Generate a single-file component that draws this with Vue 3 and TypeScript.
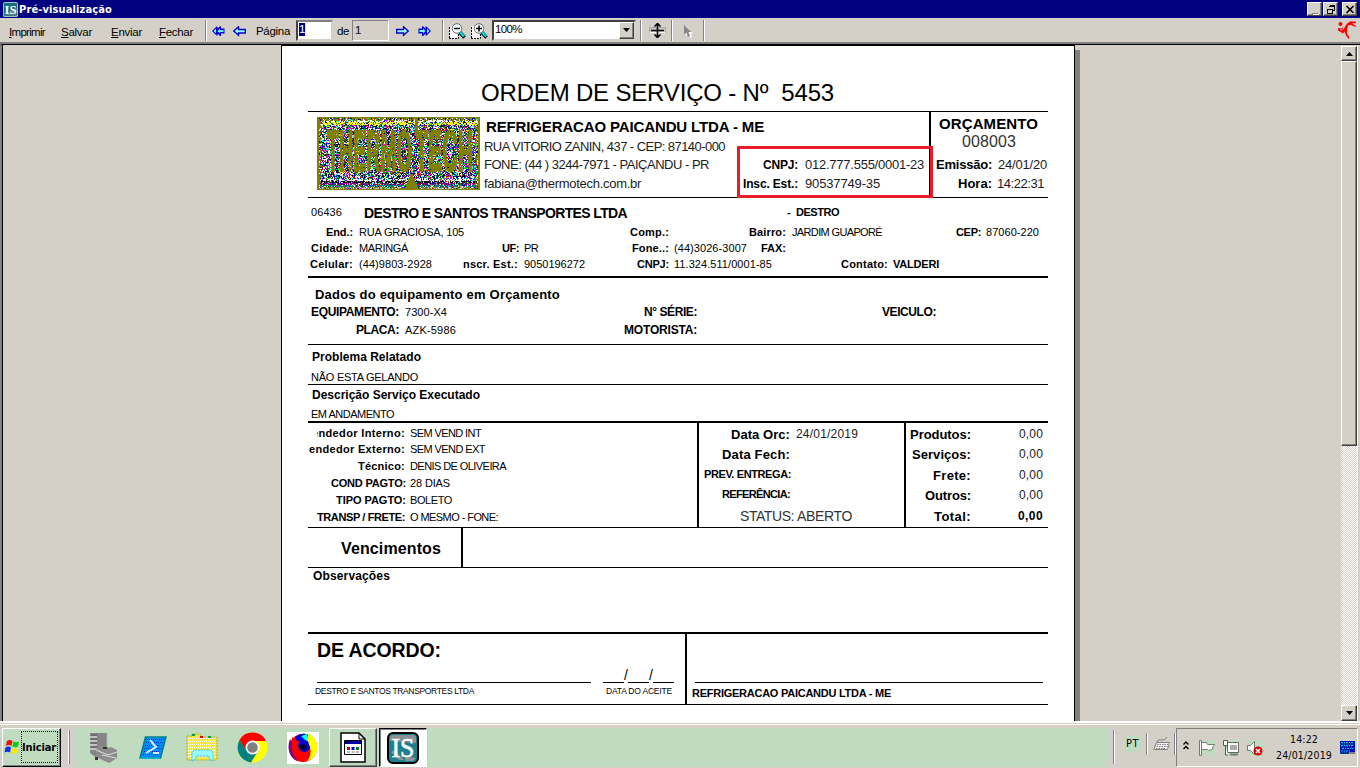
<script setup lang="ts">
import type { Directive } from 'vue'

type Cell = [left: number, right: number, text: string, kind?: string]
interface Row { y: number; cells: Cell[] }
interface Pane { left: number; right: number; divider?: boolean; logo?: boolean; rows: Row[] }
interface Band { top: number; bottom: number; rule: number; panes: Pane[] }

// Spreads the letters of a field over its printed width.
const vFit: Directive<HTMLElement, number> = {
  mounted(el, { value }) {
    const n = (el.textContent ?? '').length
    if (!n || !value) return
    const range = document.createRange()
    range.selectNodeContents(el)
    const natural = range.getBoundingClientRect().width
    el.style.letterSpacing = `${((value - natural) / n).toFixed(3)}px`
  },
}

const L = 308
const R = 1048
const r = (y: number, ...cells: Cell[]): Row => ({ y, cells })

const bands: Band[] = [
  { top: 46, bottom: 111, rule: 1, panes: [{ left: L, right: R, rows: [r(93, [481, 834, 'ORDEM DE SERVIÇO - Nº  5453', 'f24'])] }] },
  {
    top: 112, bottom: 197, rule: 1, panes: [
      { left: L, right: 482, logo: true, rows: [] },
      {
        left: 482, right: 929, divider: true, rows: [
          r(127, [486, 764, 'REFRIGERACAO PAICANDU LTDA - ME', 'b f15']),
          r(147, [484, 725, 'RUA VITORIO ZANIN, 437 - CEP: 87140-000', 'f13 thin']),
          r(165, [484, 709, 'FONE: (44 ) 3244-7971 - PAIÇANDU - PR', 'f13 thin'], [763, 798, 'CNPJ:', 'b f12'], [805, 924, '012.777.555/0001-23', 'f13 thin']),
          r(184, [484, 641, 'fabiana@thermotech.com.br', 'f13 thin'], [743, 798, 'Insc. Est.:', 'b f12'], [805, 880, '90537749-35', 'f13 thin']),
        ],
      },
      {
        left: 931, right: R, rows: [
          r(124, [939, 1038, 'ORÇAMENTO', 'b f15']),
          r(142, [962, 1016, '008003', 'f16 pale']),
          r(165, [936, 992, 'Emissão:', 'b f13'], [998, 1061, '24/01/2019', 'f13 thin']),
          r(184, [958, 992, 'Hora:', 'b f13'], [997, 1044, '14:22:31', 'f13 thin']),
        ],
      },
    ],
  },
  {
    top: 198, bottom: 276, rule: 2, panes: [{
      left: L, right: R, rows: [
        r(212, [311, 342, '06436'], [364, 627, 'DESTRO E SANTOS TRANSPORTES LTDA', 'b f14 low'], [787, 791, '-', 'b'], [796, 839, 'DESTRO', 'b']),
        r(232, [326, 353, 'End.:', 'b'], [359, 464, 'RUA GRACIOSA, 105'], [630, 669, 'Comp.:', 'b'], [749, 786, 'Bairro:', 'b'], [792, 882, 'JARDIM GUAPORÉ'], [956, 981, 'CEP:', 'b'], [986, 1039, '87060-220']),
        r(248, [311, 353, 'Cidade:', 'b'], [359, 408, 'MARINGÁ'], [502, 519, 'UF:', 'b'], [524, 538, 'PR'], [632, 669, 'Fone..:', 'b'], [674, 747, '(44)3026-3007'], [761, 786, 'FAX:', 'b']),
        r(264, [310, 353, 'Celular:', 'b'], [359, 432, '(44)9803-2928'], [463, 518, 'nscr. Est.:', 'b'], [524, 585, '9050196272'], [637, 669, 'CNPJ:', 'b'], [674, 772, '11.324.511/0001-85'], [841, 888, 'Contato:', 'b'], [893, 939, 'VALDERI', 'b']),
      ],
    }],
  },
  {
    top: 278, bottom: 344, rule: 1, panes: [{
      left: L, right: R, rows: [
        r(295, [315, 560, 'Dados do equipamento em Orçamento', 'b f13']),
        r(312, [311, 399, 'EQUIPAMENTO:', 'b f12'], [405, 447, '7300-X4'], [644, 697, 'N° SÉRIE:', 'b f12'], [882, 936, 'VEICULO:', 'b f12']),
        r(330, [356, 399, 'PLACA:', 'b f12'], [405, 456, 'AZK-5986'], [624, 697, 'MOTORISTA:', 'b f12']),
      ],
    }],
  },
  { top: 345, bottom: 384, rule: 1, panes: [{ left: L, right: R, rows: [r(357, [312, 421, 'Problema Relatado', 'b f12']), r(377, [311, 418, 'NÃO ESTA GELANDO'])] }] },
  { top: 385, bottom: 421, rule: 2, panes: [{ left: L, right: R, rows: [r(395, [312, 480, 'Descrição Serviço Executado', 'b f12']), r(414, [311, 394, 'EM ANDAMENTO'])] }] },
  {
    top: 423, bottom: 527, rule: 1, panes: [
      {
        left: L, right: 697, divider: true, rows: [
          r(433, [317, 405, 'endedor Interno:', 'b cut'], [410, 481, 'SEM VEND INT']),
          r(449, [309, 405, 'endedor Externo:', 'b'], [410, 485, 'SEM VEND EXT']),
          r(466, [358, 405, 'Técnico:', 'b'], [410, 506, 'DENIS DE OLIVEIRA']),
          r(483, [331, 406, 'COND PAGTO:', 'b'], [410, 450, '28 DIAS']),
          r(500, [336, 406, 'TIPO PAGTO:', 'b'], [410, 452, 'BOLETO']),
          r(517, [317, 405, 'TRANSP / FRETE:', 'b'], [410, 498, 'O MESMO - FONE:']),
        ],
      },
      {
        left: 699, right: 904, divider: true, rows: [
          r(434, [731, 790, 'Data Orc:', 'b f13 low'], [796, 858, '24/01/2019', 'f12 thin']),
          r(454, [722, 790, 'Data Fech:', 'b f13 low']),
          r(474, [704, 791, 'PREV. ENTREGA:', 'b']),
          r(494, [722, 790, 'REFERÊNCIA:', 'b']),
          r(516, [740, 794, 'STATUS:', 'f14 pale'], [797, 852, 'ABERTO', 'f14 pale']),
        ],
      },
      {
        left: 906, right: R, rows: [
          r(434, [910, 971, 'Produtos:', 'b f13 low'], [1019, 1043, '0,00', 'f12 thin']),
          r(454, [912, 971, 'Serviços:', 'b f13 low'], [1019, 1043, '0,00', 'f12 thin']),
          r(475, [933, 971, 'Frete:', 'b f13 low'], [1019, 1043, '0,00', 'f12 thin']),
          r(495, [925, 971, 'Outros:', 'b f13 low'], [1019, 1043, '0,00', 'f12 thin']),
          r(516, [934, 971, 'Total:', 'b f13 low'], [1018, 1043, '0,00', 'b f12']),
        ],
      },
    ],
  },
  {
    top: 528, bottom: 567, rule: 1, panes: [
      { left: L, right: 461, divider: true, rows: [r(549, [341, 441, 'Vencimentos', 'b f16'])] },
      { left: 463, right: R, rows: [] },
    ],
  },
  { top: 568, bottom: 632, rule: 2, panes: [{ left: L, right: R, rows: [r(576, [313, 390, 'Observações', 'b f12'])] }] },
  {
    top: 634, bottom: 704, rule: 1, panes: [
      {
        left: L, right: 685, divider: true, rows: [
          r(650, [317, 441, 'DE ACORDO:', 'b f19']),
          r(675, [624, 628, '/', 'f14'], [649, 653, '/', 'f14']),
          r(682.5, [317, 591, '', 'line'], [603, 624, '', 'line'], [628, 649, '', 'line'], [653, 674, '', 'line']),
          r(691, [315, 474, 'DESTRO E SANTOS TRANSPORTES LTDA', 'f8'], [606, 672, 'DATA DO ACEITE', 'f8']),
        ],
      },
      {
        left: 687, right: R, rows: [
          r(682.5, [695, 1043, '', 'line']),
          r(693, [692, 891, 'REFRIGERACAO PAICANDU LTDA - ME', 'b']),
        ],
      },
    ],
  },
]

const ROW = 12
const rowStyle = (band: Band, rows: Row[], i: number) => {
  const prev = i ? rows[i - 1].y + ROW / 2 : band.top
  return { marginTop: `${rows[i].y - ROW / 2 - prev}px` }
}
const cellStyle = (pane: Pane, cells: Cell[], i: number) => {
  const prev = i ? cells[i - 1][1] : pane.left
  return { marginLeft: `${cells[i][0] - prev}px`, width: `${cells[i][1] - cells[i][0]}px` }
}
// A cut field starts 5px before its visible box.
const fitWidth = (c: Cell) => c[1] - c[0] + (c[3]?.includes('cut') ? 5 : 0)

// Dithered company logo: one path per palette colour, filled from a seeded generator.
const LOGO_W = 163
const LOGO_H = 73
const palette = ['#fff', '#000080', '#f0f', '#0ff', '#008000', '#000', '#008080', '#f00', '#ff0', '#c0c0c0', '#00f', '#800080', '#0f0']
const weights = [24, 11, 7, 6, 9, 10, 9, 6, 3, 8, 9, 5, 3]
let seed = 5453
const rnd = () => {
  seed = (seed * 1664525 + 1013904223) >>> 0
  return seed / 4294967296
}
function dither(x0: number, y0: number, x1: number, y1: number, density: number) {
  const runs = palette.map(() => '')
  const total = weights.reduce((a, b) => a + b, 0)
  for (let y = y0; y < y1; y++) {
    for (let x = x0; x < x1; x++) {
      const edge = Math.min(x - 2, y - 2, LOGO_W - 4 - x, LOGO_H - 2 - y)
      const notch = y > 56 ? Math.abs(x - 94) < (y - 54) * 0.4 : Math.abs(x - 99) < 1.500 && y < 14
      if (notch || rnd() > (edge < 2 ? density * 0.5 : density)) continue
      let pick = rnd() * total
      let k = 0
      while (pick > weights[k]) pick -= weights[k++]
      if (y > 2 && y < 8 && x > 5 && rnd() < 0.6) k = y < 5 ? 0 : 8
      if (y > 61 && rnd() < 0.5) k = [0, 5, 11, 6, 9, 3][(y - 62) >> 1] ?? 5
      runs[k] += `M${x} ${y}h1v1h-1z`
    }
  }
  return palette.map((fill, i) => ({ fill, d: runs[i] }))
}
const logo = dither(2, 1, LOGO_W - 2, LOGO_H - 1, 0.96)
const speckle = dither(10, 13, LOGO_W - 5, 55, 0.05)
</script>

<template>
  <div class="screen">
    <header class="titlebar">
      <svg class="appicon" width="15" height="15" viewBox="0 0 32 32">
        <rect width="32" height="32" rx="4" fill="#9ec4c8" /><rect x="2" y="2" width="28" height="28" rx="3" fill="#176f7c" /><path d="M3 28L29 12v14l-3 3z" fill="#5d8794" />
        <text x="3" y="25" font-size="25" font-weight="bold" fill="#fff" textLength="26" lengthAdjust="spacingAndGlyphs" font-family="Liberation Serif, serif">IS</text>
      </svg>
      <span v-fit="93" class="caption">Pré-visualização</span>
      <div class="winbtns">
        <span class="raised"><svg width="12" height="11" shape-rendering="crispEdges"><path d="M3 9h6v1h-6z" fill="#808080" /><path d="M4 10h6v1H4z" fill="#fff" /></svg></span>
        <span class="raised"><svg width="12" height="11" shape-rendering="crispEdges"><path d="M4.500 1.500h5v5h-2M4 2h6M2.500 5.500h5v4h-5zM2 5h6" stroke="#000" fill="none" /></svg></span>
        <span class="raised close"><svg width="12" height="11"><path d="M2.500 2l7 7M9.500 2l-7 7" stroke="#000" stroke-width="1.700" /></svg></span>
      </div>
    </header>

    <nav class="toolbar">
      <span v-fit="36" class="menu m1"><u>I</u>mprimir</span>
      <span v-fit="31" class="menu m2"><u>S</u>alvar</span>
      <span v-fit="31" class="menu m3"><u>E</u>nviar</span>
      <span v-fit="34" class="menu m4"><u>F</u>echar</span>
      <i class="sep s1"></i>
      <svg class="nav n1" width="13" height="11" viewBox="0 0 13 11"><path d="M4.500.5L0 5l4.500 4.500h1V7.500L8 10h1V7.500h3.500v-5H9V.3H8L5.500 2.500v-2z" fill="#0000d8" /><path d="M1.500 5L4 2.500v5zM5.500 5L8 2.500V4h3.500v2H8v1.500z" fill="#6ff" /></svg>
      <svg class="nav n2" width="13" height="11" viewBox="0 0 13 11"><path d="M5.500.7L.8 5l4.700 4.300V7h6.800V3.500H5.500z" fill="#9ff" stroke="#0000c8" stroke-width="1.300" /></svg>
      <span v-fit="34" class="menu m5">Página</span>
      <span class="field f1"><b>1</b></span>
      <span v-fit="12" class="menu m6">de</span>
      <span class="field f2">1</span>
      <svg class="nav n3" width="13" height="11" viewBox="0 0 13 11"><path d="M7.500.7L12.200 5 7.500 9.300V7H.7V3.500h6.800z" fill="#9ff" stroke="#0000c8" stroke-width="1.300" /></svg>
      <svg class="nav n4" width="13" height="11" viewBox="0 0 13 11"><path d="M8.500.5L13 5 8.500 9.500h-1V7.500L5 10H4V7.500H.5v-5H4V.3h1l2.500 2.200v-2z" fill="#0000d8" /><path d="M11.500 5L9 2.500v5zM7.500 5L5 2.500V4H1.500v2H5v1.500z" fill="#6ff" /></svg>
      <i class="sep s2"></i>
      <svg v-for="plus in [false, true]" :key="String(plus)" class="mag" width="17" height="17" viewBox="0 0 17 17">
        <path d="M.5 3.500h8v12h-8z" fill="#fff" /><path d="M.5 4v11.500M0 15.500h9.500V11" fill="none" stroke="#000" stroke-dasharray="2 1" />
        <path d="M11 9.500l4.500 5" stroke="#000" stroke-width="3.500" /><path d="M10.500 8.500l4.500 5" stroke="#00d8e8" stroke-width="2.600" />
        <circle cx="8" cy="5.500" r="4.800" fill="#f4ffff" stroke="#666" /><path :d="plus ? 'M5 5.500h6M8 2.500v6' : 'M5 5.500h6'" stroke="#000" stroke-width="1.500" />
      </svg>
      <span class="select"><span v-fit="27" class="pct">100%</span><span class="raised drop"><svg width="7" height="4"><path d="M0 0h7L3.500 4z" /></svg></span></span>
      <i class="sep s3"></i>
      <svg class="fit" width="17" height="15" viewBox="0 0 17 15"><path d="M.5 4.500h16v5H.5z" fill="#c8c8c8" stroke="#aaa" /><path d="M1 9.500h15" stroke="#fff" /><path d="M2 7.500h13M8.500 1v13M5.500 3.500l3-3 3 3M5.500 11.500l3 3 3-3" fill="none" stroke="#000" stroke-width="1.600" /></svg>
      <i class="sep s4"></i>
      <svg class="ptr" width="9" height="13" viewBox="0 0 9 13"><path d="M2 1v10l2.500-2 1.500 4 2-1-1.500-3.500H9z" fill="#fff" /><path d="M0 0v9.500L2.300 7.500 4 12l2-1-1.700-4H7.500z" fill="#868686" /></svg>
      <i class="sep s5"></i>
      <svg class="brand" width="19" height="19" viewBox="0 0 19 19"><circle cx="2.500" cy="3" r="2" fill="#f00" /><path d="M5.500 8L9 2.500 12.500.3 18 .8v1.500h-4L18 5v1l-5-2-3 .5-1 4 .3 4.500 2 3-.3 2.200-3-3.700L6.500 10.500 5 12.500 0 9.500V7l4 .5 1-2z" fill="#f00" /><path d="M2 9l2.500-.5L6 6.500" fill="none" stroke="#d4d0c8" /></svg>
    </nav>

    <main class="viewer">
      <section class="canvas">
        <article class="sheet">
          <div v-for="band in bands" :key="band.top" class="band" :style="{ height: `${band.bottom - band.top}px`, borderBottomWidth: `${band.rule}px` }">
            <div v-for="pane in band.panes" :key="pane.left" class="pane" :class="{ divider: pane.divider }" :style="{ width: `${pane.right - pane.left}px` }">
              <svg v-if="pane.logo" class="logo" :width="LOGO_W" :height="LOGO_H" shape-rendering="crispEdges">
                <rect :width="LOGO_W" :height="LOGO_H" fill="#808000" />
                <path v-for="p in logo" :key="p.fill" :d="p.d" :fill="p.fill" />
                <g fill="#808000" stroke="#808000" stroke-width="2" font-family="Liberation Sans, sans-serif" font-weight="bold" font-size="57">
                  <text transform="translate(10 54) scale(.344 1)">THERMO</text>
                  <text transform="translate(98 54) scale(.375 1)">TECH</text>
                </g>
                <path v-for="p in speckle" :key="`s${p.fill}`" :d="p.d" :fill="p.fill" />
              </svg>
              <div v-for="(row, i) in pane.rows" :key="row.y" class="row" :style="rowStyle(band, pane.rows, i)">
                <span v-for="(cell, j) in row.cells" :key="cell[0]" v-fit="fitWidth(cell)" class="cell" :class="cell[3]" :style="cellStyle(pane, row.cells, j)">{{ cell[2] }}</span>
              </div>
            </div>
          </div>
          <div class="highlight"></div>
        </article>
      </section>
      <aside class="scroll">
        <span class="raised up"><svg width="7" height="4"><path d="M0 4h7L3.500 0z" /></svg></span>
        <span class="raised thumb"></span>
        <span class="track"></span>
        <span class="raised down"><svg width="7" height="4"><path d="M0 0h7L3.500 4z" /></svg></span>
      </aside>
    </main>

    <footer class="taskbar">
      <button class="start">
        <svg width="17" height="17" viewBox="0 0 17 17"><path d="M3 2q3-2 5.500 0L7.500 7Q5 5 1.800 7z" fill="#f01000" /><path d="M9.500 2.500q3 1.500 5.500 0L14 7.500q-3 1.300-5.500 0z" fill="#00d010" /><path d="M1.500 8.500q3-2 5.500 0L6 13.500Q3.500 12 .5 13.500z" fill="#1030f0" /><path d="M8.300 9q3 1.500 5.500 0l-1 5q-3 1.500-5.500 0z" fill="#f8e800" /></svg>
        <span class="focus"><span v-fit="34">Iniciar</span></span>
      </button>
      <i class="grip"></i>
      <div class="band-green">
        <svg class="t1" width="30" height="32" viewBox="0 0 30 32"><path d="M1 1h18v19H9v7l-8-6z" fill="#858585" /><path d="M1 5h7M1 9h7M1 13h7M1 17h7" stroke="#fff" /><path d="M2 3h6M2 7h6M2 11h6M2 15h6" stroke="#555" /><path d="M18.500 1v14" stroke="#c8c8c8" stroke-width="1.500" /><path d="M7 17l6-3 5 2 4-1 6 3v8l-8 5-13-6z" fill="#8c8c8c" /><path d="M7 18l12 5 9-3M13 23l14 3" stroke="#ddd" fill="none" /><path d="M6 25h3v3H6zM14 15h4v2h-4z" fill="#333" /></svg>
        <svg class="t2" width="28" height="23" viewBox="0 0 28 23"><path d="M6.500 1h20.500l-5.500 21H1z" fill="#008cff" stroke="#008080" stroke-width="1.500" /><path d="M8 3.500h17M7 6.500h18M6 9.500h18M5.500 12.500h17M5 15.500h16M4 18.500h16" stroke="#0030c0" stroke-dasharray="1 1" /><path d="M11 4l6 7-10 6M14 17h6" fill="none" stroke="#d8f0ff" stroke-width="2" /><path d="M1 22h20" stroke="#0cf" /></svg>
        <svg class="t3" width="33" height="31" viewBox="0 0 33 31"><path d="M1 4h5V2h8l2 3h15v23H1z" fill="#f0ea50" /><path d="M2 6.500h28M2 9.500h28M2 12.500h28M2 15.500h28M2 18.500h28M2 21.500h28M2 24.500h28" stroke="#fff" stroke-dasharray="1 1" /><path d="M1 4h5V2h8l2 3h15v23H1z" fill="none" stroke="#a8a830" stroke-dasharray="2 1" /><path d="M6 29v-7q0-4 5-4h12q4 0 4 4v7l-4-2v-3H10v3z" fill="#9ff" stroke="#38b8e0" stroke-dasharray="2 1" /><path d="M6 2h3v2H6zM22 4h3v2h-3z" fill="#00a040" /><path d="M14 4h3v2h-3z" fill="#e00000" /></svg>
        <svg class="t4" width="31" height="31" viewBox="0 0 31 31"><circle cx="15.500" cy="15.500" r="15" fill="#ff0" /><path d="M2.500 8A15 15 0 0 1 29 9H15.500L9 19z" fill="#f00" /><path d="M2.500 8A15 15 0 0 0 14 30.400L21 19 9 18z" fill="#008080" /><circle cx="15.500" cy="15.500" r="7" fill="#fff" /><circle cx="15.500" cy="15.500" r="5.300" fill="#808080" /></svg>
        <svg class="t5" width="32" height="32" viewBox="0 0 32 32"><rect width="32" height="32" fill="#fff" /><circle cx="16" cy="16" r="14" fill="#f00" /><path d="M8 5Q15-1 22 3l3 12-9 7-6-6z" fill="#0000d8" /><path d="M14 4l6-2 2 8-4-2z" fill="#0ff" /><path d="M12 13l5-1 3 3-4 3-3-1z" fill="#002" /><path d="M21 1q9 5 9.500 14Q30 26 20 29.500 25 23 23 15 20 9 21 1z" fill="#ff0" /><path d="M3 7q-3 8 0 15 3 6 8 7Q3 20 5 10z" fill="#800080" /><path d="M5 5q4 4 7 4l-1 6q3 7 11 5 2 7-7 10-11-5-10-25z" fill="#f00" /></svg>
        <span class="raised taskbtn b1"><svg width="26" height="31" viewBox="0 0 26 31"><path d="M1 1h18l6 6v23H1z" fill="#fff" stroke="#000" stroke-width="1.500" /><path d="M19 1v6h6" fill="none" stroke="#000" /><path d="M4.500 8.500h17v14h-17z" fill="#fff" stroke="#000" /><path d="M5 9h16v3H5z" fill="#0000a0" /><path d="M7 15h3v3H7z" fill="#d00000" /><path d="M11.500 15h3v3h-3z" fill="#0000f0" /><path d="M16 15h3v3h-3z" fill="#008000" /><path d="M7 20h3m1.500 0h3m1.500 0h3" stroke="#777" /></svg></span>
        <span class="taskbtn b2"><svg width="32" height="32" viewBox="0 0 32 32"><rect x="1" y="1" width="30" height="30" rx="5" fill="#1d808a" stroke="#000" stroke-width="2" /><path d="M3 6q0-3 3-3h20q3 0 3 3v5L3 9z" fill="#8a9298" /><path d="M4 20l8 8h5L8 18zM18 24l11 2-3 3h-8z" fill="#8a9298" /><text x="4.500" y="25" font-size="27" fill="#fff" stroke="#fff" stroke-width=".6" textLength="23" lengthAdjust="spacingAndGlyphs" font-family="Liberation Serif, serif">IS</text></svg></span>
      </div>
      <i class="grip g2"></i>
      <span class="lang"><span v-fit="13">PT</span></span>
      <i class="grip g3"></i>
      <svg class="kbd" width="17" height="15" viewBox="0 0 17 15"><path d="M3.500 6.500h13l-2 7H.8z" fill="#eee" stroke="#808080" /><path d="M4 8.500h11M3.500 10.500h11M3 12.500h10" stroke="#808080" stroke-dasharray="1.500 1" /><path d="M4 6q0-3 4-2t6-3" fill="none" stroke="#808080" /></svg>
      <i class="grip g4"></i>
      <div class="tray">
        <svg class="chev" width="6" height="9" viewBox="0 0 6 9"><path d="M.5 3.500L3 1l2.500 2.500M.5 8L3 5.500 5.500 8" fill="none" stroke="#000" stroke-width="1.400" /></svg>
        <svg class="i1" width="16" height="16" viewBox="0 0 16 16"><rect width="16" height="16" fill="#c0dcc0" /><path d="M.5.500h2v15h-2zM2.500 2.500h5l1 2h7q-2 2-2 5l-4 1-1-1h-6z" fill="#fff" stroke="#777" /></svg>
        <svg class="i2" width="16" height="16" viewBox="0 0 16 16"><rect width="16" height="16" fill="#c0dcc0" /><path d="M4.500 2.500h11v10h-11z" fill="#fff" stroke="#666" /><path d="M7 5h7v5H7z" fill="#aaa" /><path d="M7 14.500h8" stroke="#777" stroke-width="2" /><path d="M.5.500h4v5h-4zM2.500 6v9H5" fill="#fff" stroke="#555" /></svg>
        <svg class="i3" width="16" height="16" viewBox="0 0 16 16"><rect width="16" height="16" fill="#c0dcc0" /><path d="M.5 5.500h3l4-4v13l-4-4h-3z" fill="#fff" stroke="#777" /><circle cx="11" cy="11" r="4.500" fill="#e00000" /><path d="M9 9l4 4M13 9l-4 4" stroke="#fff" stroke-width="1.500" /></svg>
        <div class="clock"><span v-fit="28">14:22</span><span v-fit="56">24/01/2019</span></div>
        <svg class="i4" width="15" height="13" viewBox="0 0 15 13"><rect width="15" height="13" fill="#0010b0" /><path d="M1 1.500h13M1 4.500h13M2 7.500h11M1 10h9" stroke="#00c8f0" stroke-dasharray="2 1 1 1" /><path d="M0 3h14M1 6h12M0 12h11" stroke="#008080" stroke-dasharray="1 1" /><path d="M9 11h6v2H9z" fill="#808080" /></svg>
      </div>
    </footer>
  </div>
</template>

<style>
body { margin: 0; overflow: hidden; }
</style>

<style scoped>
.screen { width: 1360px; height: 768px; display: flex; flex-direction: column; background: #d4d0c8; overflow: hidden; color: #000; font: 11px/12px "Liberation Sans", Arial, sans-serif; white-space: pre; }
.screen svg { display: block; flex: none; }
.raised { display: flex; align-items: center; justify-content: center; box-sizing: border-box; background: #d4d0c8; border: 1px solid; border-color: #fff #404040 #404040 #fff; box-shadow: inset -1px -1px #808080; flex: none; }

.titlebar { height: 18px; flex: none; background: #000080; display: flex; align-items: center; padding: 0 3px 0 3px; }
.caption { color: #fff; font: bold 11px/18px "DejaVu Sans Condensed", "DejaVu Sans", sans-serif; margin-left: 1px; padding-top: 1px; }
.winbtns { margin-left: auto; display: flex; gap: 1px; }
.winbtns .raised { width: 15px; height: 14px; }
.winbtns .close { margin-left: 3px; }

.toolbar { height: 24px; flex: none; display: flex; align-items: center; font-size: 11.500px; border-bottom: 2px solid #808080; }
.menu { flex: none; line-height: 14px; padding-top: 3px; }
.m1 { width: 36px; margin-left: 9px; }
.m2 { width: 31px; margin-left: 16px; }
.m3 { width: 31px; margin-left: 19px; }
.m4 { width: 34px; margin-left: 17px; }
.m5 { width: 34px; margin-left: 10px; padding-top: 1px; }
.m6 { width: 12px; margin-left: 4px; padding-top: 1px; }
.sep { width: 1px; height: 21px; flex: none; background: #808080; border-right: 1px solid #fff; }
.s1 { margin-left: 12px; }
.n1 { margin-left: 5px; }
.n2 { margin-left: 8px; }
.n3 { margin-left: 7px; }
.n4 { margin-left: 9px; }
.s2 { margin-left: 11px; }
.nav { margin-top: 2px; }
.field { box-sizing: border-box; width: 37px; height: 21px; flex: none; border: 1px solid; border-color: #808080 #fff #fff #808080; line-height: 19px; padding-left: 1px; }
.f1 { background: #fff; margin-left: 6px; border: 2px solid; border-color: #808080 #d4d0c8 #d4d0c8 #404040; line-height: 15px; }
.f1 b { display: inline-block; width: 6px; height: 13px; line-height: 13px; background: #000080; color: #fff; font-weight: normal; border-right: 1px solid #ff0; }
.f2 { margin-left: 3px; padding-left: 2px; }
.mag { margin: 2px 0 0 5px; }
.select { margin-left: 4px; box-sizing: border-box; width: 144px; height: 21px; flex: none; display: flex; background: #fff; border: 2px solid; border-color: #404040 #d4d0c8 #d4d0c8 #404040; }
.pct { width: 124px; line-height: 15px; padding-left: 1px; }
.drop { width: 15px; height: 17px; }
.s3 { margin-left: 4px; }
.fit { margin: 1px 0 0 7px; }
.s4 { margin-left: 5px; }
.ptr { margin: 3px 0 0 11px; }
.s5 { margin-left: 10px; }
.brand { margin: 0 3px 0 auto; }

.viewer { height: 677px; box-sizing: border-box; flex: none; display: flex; border-left: 2px solid #808080; border-top: 1px solid #000; }
.canvas { flex: none; width: 1339px; box-sizing: border-box; border-left: 1px solid #000; overflow: hidden; }
.sheet { position: relative; margin-left: 278px; box-sizing: border-box; width: 794px; height: 690px; background: #fff; border: 1px solid #000; box-shadow: 5px 5px #808080; padding-left: 26px; }
.band { display: flex; width: 740px; border-bottom: 0 solid #000; }
.pane { flex: none; overflow-x: clip; overflow-y: visible; }
.divider { border-right: 2px solid #000; }
.row { display: flex; height: 12px; line-height: 12px; }
.cell { flex: none; font-size: 11px; }
.b { font-weight: bold; }
.low { padding-top: .5px; }
.cut { text-indent: -5px; overflow-x: clip; }
.f8 { font-size: 8.500px; }
.f12 { font-size: 12px; }
.f13 { font-size: 13px; }
.f14 { font-size: 14px; }
.f15 { font-size: 15px; }
.f16 { font-size: 16px; }
.f19 { font-size: 19.500px; }
.f24 { font-size: 24px; }
.thin { color: #1c1c1c; }
.pale { color: #333; }
.line { height: 1px; background: #000; align-self: center; }
.logo { margin: 5px 0 0 9px; }
.highlight { position: absolute; left: 455px; top: 100px; width: 190px; height: 46px; border: 3px solid #ed1c24; }

.scroll { width: 16px; flex: none; display: flex; flex-direction: column; padding-top: 1px; border-right: 1px solid #fff; }
.up { height: 15px; }
.thumb { height: 385px; }
.track { flex: 1; background: conic-gradient(#fff 25%, #d4d0c8 0 50%, #fff 0 75%, #d4d0c8 0) 0 0 / 2px 2px; }
.down { height: 16px; }

.taskbar { height: 47px; box-sizing: border-box; flex: none; display: flex; border-top: 2px solid #fff; padding-top: 4px; position: relative; box-shadow: inset 0 1px #d4d0c8, inset 0 2px #fff; }
.start { box-sizing: border-box; width: 59px; height: 39px; margin: 1px 0 0 2px; padding: 0 0 0 1px; display: flex; align-items: center; background: #c0dcc0; border: 1px solid; border-color: #fff #000 #000 #fff; box-shadow: inset -1px -1px #808080; flex: none; }
.focus { width: 37px; height: 32px; box-sizing: border-box; margin-top: -2px; border: 1px dotted #000; font: bold 11px/31px "DejaVu Sans Condensed", "DejaVu Sans", sans-serif; text-align: left; }
.grip { width: 1px; height: 34px; margin: 3px 0 0 7px; background: #fff; border-right: 1px solid #808080; flex: none; }
.band-green { width: 1033px; height: 39px; margin: 1px 0 0 5px; background: #c0dcc0; display: flex; align-items: center; flex: none; }
.t1 { margin-left: 14px; }
.t2 { margin-left: 20px; }
.t3 { margin-left: 19px; }
.t4 { margin-left: 18px; }
.t5 { margin-left: 19px; }
.taskbtn { width: 48px; height: 39px; box-sizing: border-box; display: flex; align-items: center; justify-content: center; }
.b1 { margin-left: 10px; background: #c0dcc0; }
.b2 { margin-left: 2px; background: #fff; border: 1px solid; border-color: #000 #fff #fff #000; box-shadow: inset 1px 1px #808080; }
.g2 { margin-left: 5px; background: #808080; border-right-color: #fff; }
.lang { width: 16px; height: 16px; margin: 9px 0 0 10px; background: #c0dcc0; font: 11px/16px "DejaVu Sans Condensed", "DejaVu Sans", sans-serif; padding-left: 1px; box-sizing: border-box; flex: none; }
.g3, .g4 { height: 22px; margin: 6px 0 0 5px; background: #808080; border-right-color: #fff; }
.kbd { margin: 9px 0 0 5px; }
.g4 { margin-left: 4px; }
.tray { width: 182px; height: 39px; box-sizing: border-box; margin: 1px 0 0 0; border: 1px solid; border-color: #808080 #fff #fff #808080; display: flex; align-items: center; flex: none; }
.chev { margin: -4px 0 0 6px; }
.i1 { margin-left: 10px; }
.i2 { margin-left: 8px; }
.i3 { margin-left: 8px; }
.clock { width: 56px; margin: -2px 0 0 13px; display: flex; flex-direction: column; align-items: center; font: 10.500px/16px "DejaVu Sans Condensed", "DejaVu Sans", sans-serif; }
.i4 { margin-left: 8px; }
</style>
